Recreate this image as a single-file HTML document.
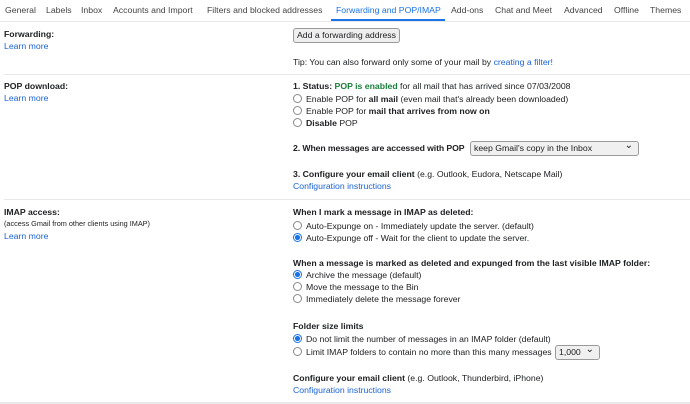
<!DOCTYPE html>
<html><head><meta charset="utf-8"><style>
*{margin:0;padding:0;box-sizing:border-box}
body{width:690px;height:404px;background:#fff;position:relative;overflow:hidden;font-family:"Liberation Sans",Arial,sans-serif;font-size:8.7px;color:#202124}
.a{position:absolute;white-space:nowrap;line-height:12px}
.t{color:#444}
.b{font-weight:bold}
.l{color:#1a62d6}
.g{color:#188038;font-weight:bold}
.hr{position:absolute;left:4px;right:0;height:1px;background:#e8e8e8}
.r{display:inline-block;width:9px;height:9px;border:1px solid #8a8a8a;border-radius:50%;vertical-align:-1px;margin-right:4px;background:#fff}
.r.on{border-color:#1a73e8;background:radial-gradient(circle,#1a73e8 0 2.3px,#fff 2.8px)}
.sel{position:absolute;border:1px solid #9a9a9a;border-radius:3px;background:#f0f0f0;font-size:8.7px;line-height:13px;padding-left:3px;white-space:nowrap}
.sel:after{content:"⌄";position:absolute;right:5px;top:-3px;font-size:10px}
</style></head><body>
<div class="a t" style="left:5px;top:4px">General</div>
<div class="a t" style="left:46px;top:4px">Labels</div>
<div class="a t" style="left:81px;top:4px">Inbox</div>
<div class="a t" style="left:113px;top:4px">Accounts and Import</div>
<div class="a t" style="left:207px;top:4px">Filters and blocked addresses</div>
<div class="a" style="left:336px;top:4px;color:#1a73e8">Forwarding and POP/IMAP</div>
<div class="a t" style="left:451px;top:4px">Add-ons</div>
<div class="a t" style="left:495px;top:4px">Chat and Meet</div>
<div class="a t" style="left:564px;top:4px">Advanced</div>
<div class="a t" style="left:614px;top:4px">Offline</div>
<div class="a t" style="left:650px;top:4px">Themes</div>
<div style="position:absolute;left:331px;top:19px;width:114px;height:2px;background:#1a73e8"></div>
<div class="hr" style="top:21px;left:0"></div>

<div class="a b" style="left:4px;top:28px">Forwarding:</div>
<div class="a l" style="left:4px;top:40px">Learn more</div>
<div style="position:absolute;left:293px;top:28px;width:107px;height:15px;border:1px solid #999;border-radius:3px;background:#efefef;font-size:8.7px;line-height:13px;padding-left:3px;white-space:nowrap">Add a forwarding address</div>
<div class="a" style="left:293px;top:56px">Tip: You can also forward only some of your mail by <span class="l">creating a filter!</span></div>
<div class="hr" style="top:74px"></div>

<div class="a b" style="left:4px;top:80px">POP download:</div>
<div class="a l" style="left:4px;top:92px">Learn more</div>
<div class="a" style="left:293px;top:80px"><b>1. Status: </b><span class="g">POP is enabled</span> for all mail that has arrived since 07/03/2008</div>
<div class="a" style="left:293px;top:93px"><span class="r"></span>Enable POP for <b>all mail</b> (even mail that's already been downloaded)</div>
<div class="a" style="left:293px;top:105px"><span class="r"></span>Enable POP for <b>mail that arrives from now on</b></div>
<div class="a" style="left:293px;top:117px"><span class="r"></span><b>Disable</b> POP</div>
<div class="a b" style="left:293px;top:142px;letter-spacing:-0.1px">2. When messages are accessed with POP</div>
<div class="sel" style="left:470px;top:141px;width:169px;height:15px">keep Gmail's copy in the Inbox</div>
<div class="a" style="left:293px;top:168px"><b>3. Configure your email client</b> (e.g. Outlook, Eudora, Netscape Mail)</div>
<div class="a l" style="left:293px;top:180px">Configuration instructions</div>
<div class="hr" style="top:199px"></div>

<div class="a b" style="left:4px;top:206px">IMAP access:</div>
<div class="a" style="left:4px;top:218px;font-size:7.3px">(access Gmail from other clients using IMAP)</div>
<div class="a l" style="left:4px;top:230px">Learn more</div>
<div class="a b" style="left:293px;top:206px">When I mark a message in IMAP as deleted:</div>
<div class="a" style="left:293px;top:220px"><span class="r"></span>Auto-Expunge on - Immediately update the server. (default)</div>
<div class="a" style="left:293px;top:232px"><span class="r on"></span>Auto-Expunge off - Wait for the client to update the server.</div>
<div class="a b" style="left:293px;top:257px">When a message is marked as deleted and expunged from the last visible IMAP folder:</div>
<div class="a" style="left:293px;top:269px"><span class="r on"></span>Archive the message (default)</div>
<div class="a" style="left:293px;top:281px"><span class="r"></span>Move the message to the Bin</div>
<div class="a" style="left:293px;top:293px"><span class="r"></span>Immediately delete the message forever</div>
<div class="a b" style="left:293px;top:320px">Folder size limits</div>
<div class="a" style="left:293px;top:333px"><span class="r on"></span>Do not limit the number of messages in an IMAP folder (default)</div>
<div class="a" style="left:293px;top:346px"><span class="r"></span>Limit IMAP folders to contain no more than this many messages</div>
<div class="sel" style="left:555px;top:345px;width:45px;height:15px">1,000</div>
<div class="a" style="left:293px;top:372px"><b>Configure your email client</b> (e.g. Outlook, Thunderbird, iPhone)</div>
<div class="a l" style="left:293px;top:384px">Configuration instructions</div>
<div class="hr" style="top:402px;left:0;height:2px"></div>
</body></html>
